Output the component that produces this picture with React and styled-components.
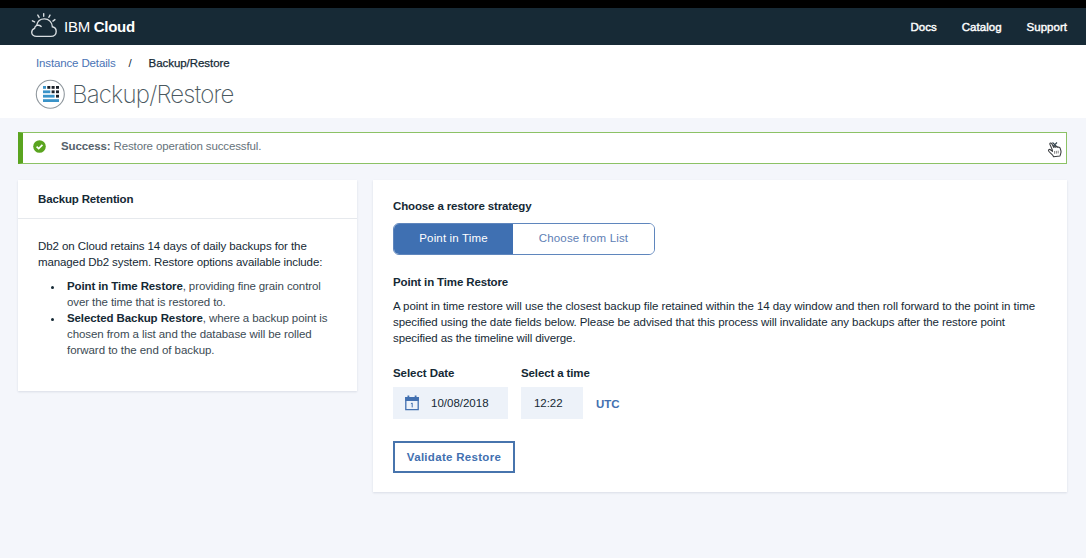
import React from "react";
import styled, { createGlobalStyle } from "styled-components";

const GlobalStyle = createGlobalStyle`
  *, *::before, *::after { box-sizing: border-box; }
  html, body { margin: 0; height: 100%; }
  body {
    background: #f4f6fb;
    font-family: "Liberation Sans", Arial, sans-serif;
    font-size: 11.5px;
    line-height: 16px;
    color: #152935;
    overflow: hidden;
  }
  button { font: inherit; }
`;

const Page = styled.div`
  display: flex;
  flex-direction: column;
  height: 558px;
`;

const TopBar = styled.header`
  display: flex;
  align-items: center;
  justify-content: space-between;
  height: 45px;
  padding: 0 19px 0 30px;
  border-top: 8px solid #000;
  background: #172a36;
  color: #fff;
  flex: none;
`;

const Brand = styled.div`
  display: flex;
  align-items: center;
  gap: 6px;
  font-size: 15px;
  letter-spacing: -0.27px;
  svg { margin-top: -3px; }
`;

const Nav = styled.nav`
  display: flex;
  gap: 25px;
`;

const NavLink = styled.a`
  letter-spacing: 0.02px;
  -webkit-text-stroke: 0.4px #fff;
`;

const PageHead = styled.section`
  height: 73px;
  flex: none;
  padding: 10px 36px 0;
  background: #fff;
`;

const Crumbs = styled.div`
  display: flex;
`;

const CrumbLink = styled.a`
  color: #4a73b5;
  letter-spacing: -0.14px;
`;

const CrumbSlash = styled.span`
  width: 33px;
  padding-left: 13px;
`;

const CrumbHere = styled.span`
  letter-spacing: -0.06px;
  -webkit-text-stroke: 0.25px #152935;
`;

const TitleRow = styled.div`
  display: flex;
  align-items: center;
  gap: 7px;
  margin: 8px 0 0 -1px;
  svg { margin-top: -1px; }
`;

const Title = styled.h1`
  margin: 1px 0 0;
  font-family: Inter, "Liberation Sans", sans-serif;
  font-size: 24px;
  line-height: 30px;
  font-weight: 250;
  letter-spacing: -0.8px;
  color: #4a5860;
`;

const Notice = styled.div`
  position: relative;
  display: flex;
  align-items: center;
  height: 32px;
  margin: 14px 19px 0 18px;
  padding: 0 4px 4px 10px;
  border: 1px solid #8cc265;
  border-left: 5px solid #5aa41f;
  background: #fff;
  color: #66727a;
  flex: none;
  strong { color: #55626b; }
`;

const NoticeText = styled.span`
  margin-left: 15px;
  flex: 1;
  letter-spacing: -0.13px;
`;

const Columns = styled.main`
  display: flex;
  align-items: flex-start;
  gap: 16px;
  margin: 16px 19px 0 18px;
`;

const Card = styled.section`
  width: ${(p) => p.$width}px;
  height: ${(p) => p.$height}px;
  background: #fff;
  box-shadow: 0 1px 2px rgba(40, 60, 90, 0.13);
`;

const CardHead = styled.div`
  height: 39px;
  padding: 11px 20px;
  border-bottom: 1px solid #e6e9ed;
`;

const CardBody = styled.div`
  padding: ${(p) => p.$top}px 20px 0;
`;

const Heading = styled.h2`
  margin: 0;
  font-size: 11.5px;
  line-height: 16px;
  font-weight: 700;
  letter-spacing: ${(p) => p.$track || 0}px;
`;

const Line = styled.span`
  display: block;
  white-space: nowrap;
  letter-spacing: ${(p) => p.$track || 0}px;
`;

const Copy = styled.p`
  margin: ${(p) => p.$top || 0}px 0 0;
`;

const Bullets = styled.ul`
  margin: 8px 0 0;
  padding-left: 26px;
  color: #3b4a54;
  li { padding-left: 3px; }
  strong, li::marker { color: #152935; }
`;

const Toggle = styled.div`
  display: flex;
  width: 262px;
  height: 32px;
  margin: 9px 0 19px;
  border: 1px solid #5f86bd;
  border-radius: 6px;
  overflow: hidden;
`;

const ToggleOption = styled.button`
  width: ${(p) => p.$width}px;
  padding: 0 0 2px;
  border: 0;
  letter-spacing: 0.15px;
  background: ${(p) => (p.$active ? "#3f70b2" : "#fff")};
  color: ${(p) => (p.$active ? "#fff" : "#6080b5")};
`;

const Fields = styled.div`
  display: flex;
  gap: 13px;
  margin-top: 19px;
`;

const Field = styled.div`
  width: ${(p) => p.$width}px;
  white-space: nowrap;
`;

const FieldBox = styled.div`
  display: flex;
  align-items: center;
  gap: 12px;
  height: 32px;
  margin-top: 6px;
  padding: 0 0 1px ${(p) => p.$left}px;
  background: #edf2f9;
  letter-spacing: ${(p) => p.$track || 0}px;
`;

const Zone = styled.span`
  align-self: flex-end;
  margin-bottom: 7px;
  color: #4270b0;
  font-weight: 700;
`;

const OutlineButton = styled.button`
  width: 122px;
  height: 32px;
  margin-top: 22px;
  padding: 0 0 1px;
  border: 2px solid #4774ad;
  background: #fff;
  color: #4270b0;
  font-weight: 700;
  letter-spacing: 0.3px;
`;

const CloudIcon = () => (
  <svg width="28" height="26" viewBox="0 0 28 26" fill="none" stroke="#d8dde1" strokeWidth="1.4" strokeLinecap="round">
    <path d="M6.6 24.4H20.9C24.2 24.4 26.2 22.2 26.2 19.5C26.2 17.1 24.6 15.2 22.4 14.8C22.2 10.2 18.8 6.9 14.4 6.9C10.3 6.9 7.4 9.4 6.7 13.4C5.4 14 4.7 15.1 4.6 16.3C2.9 17 1.7 18.6 1.7 20.3C1.7 22.6 3.8 24.4 6.6 24.4Z" />
    <path d="M6.7 13.4C8.4 12.9 10 13.3 11.2 14.4" />
    <path d="M13.7 1.6V4.2M7.8 3.1L9.1 5.4M20 3.1L18.9 5.3M2.4 8.8L4.6 9.9M24.9 7.6L22.9 9.1" />
  </svg>
);

const ServiceIcon = () => (
  <svg width="30" height="30" viewBox="0 0 30 30">
    <circle cx="15.3" cy="15.2" r="14" fill="#fff" stroke="#8f979d" strokeWidth="1.1" />
    <g fill="#1b2129">
      <rect x="12.3" y="7" width="3" height="2.8" />
      <rect x="16.6" y="7" width="3" height="2.8" />
      <rect x="21" y="7" width="3" height="2.8" />
      <rect x="16.6" y="11.4" width="3" height="2.8" />
      <rect x="21" y="11.4" width="3" height="2.8" />
      <rect x="21" y="15.8" width="3" height="2.8" />
    </g>
    <g fill="#3a93c8">
      <rect x="8" y="7" width="3" height="2.8" />
      <rect x="8" y="11.4" width="7.3" height="2.8" />
      <rect x="8" y="15.8" width="11.6" height="2.8" />
      <rect x="8" y="20.2" width="16" height="2.8" />
    </g>
  </svg>
);

const SuccessIcon = () => (
  <svg width="13" height="13" viewBox="0 0 13 13">
    <circle cx="6.5" cy="6.5" r="6.3" fill="#5aa41f" />
    <path d="M3.6 6.6L5.7 8.6L9.4 4.8" fill="none" stroke="#fff" strokeWidth="1.7" />
  </svg>
);

const CalendarIcon = () => (
  <svg width="14" height="16" viewBox="0 0 14 16">
    <path d="M0.8 2.6H13.2V14.6H0.8Z" fill="none" stroke="#4270b0" strokeWidth="1.3" />
    <path d="M0.2 2H13.8V6H0.2ZM2.5 0.4H4.3V3H2.5ZM9.7 0.4H11.5V3H9.7Z" fill="#4270b0" />
    <path d="M5.9 8.7L7.2 8V12.4" fill="none" stroke="#4270b0" strokeWidth="1" />
  </svg>
);

const Pointer = styled.svg`
  position: absolute;
  right: 3px;
  top: 7px;
`;

const HandOverClose = () => (
  <Pointer width="16" height="18" viewBox="0 0 16 18">
    <path d="M5.5 2.5L10 7M10 2.5L5.5 7" stroke="#33434d" strokeWidth="1.1" />
    <path
      d="M5.2 9.6L2.9 4.2C2.5 3 4.1 2.5 4.7 3.6L6.8 7.4C6.9 6.4 8.2 6.3 8.7 7.2C9.1 6.3 10.4 6.5 10.7 7.4C11.5 6.8 12.9 7.4 13.2 8.4L14 11.2C14.3 13.2 13.4 14.2 13 16L6.6 16.7C5.8 14.6 3.4 13.5 1.8 11.3C0.9 9.9 2.2 8.9 3.4 9.7L5.5 11.3Z"
      fill="#fff"
      stroke="#3a3d40"
      strokeWidth="1.1"
      strokeLinejoin="round"
    />
    <path d="M7.6 11V13.8M9.4 10.9V13.6M11.2 10.7V13.4" stroke="#777" strokeWidth="0.9" />
  </Pointer>
);

export default function App() {
  return (
    <Page>
      <GlobalStyle />
      <TopBar>
        <Brand>
          <CloudIcon />
          <span>IBM <strong>Cloud</strong></span>
        </Brand>
        <Nav>
          <NavLink>Docs</NavLink>
          <NavLink>Catalog</NavLink>
          <NavLink>Support</NavLink>
        </Nav>
      </TopBar>
      <PageHead>
        <Crumbs>
          <CrumbLink>Instance Details</CrumbLink>
          <CrumbSlash>/</CrumbSlash>
          <CrumbHere>Backup/Restore</CrumbHere>
        </Crumbs>
        <TitleRow>
          <ServiceIcon />
          <Title>Backup/Restore</Title>
        </TitleRow>
      </PageHead>
      <Notice>
        <SuccessIcon />
        <NoticeText><strong>Success:</strong> Restore operation successful.</NoticeText>
        <HandOverClose />
      </Notice>
      <Columns>
        <Card $width={339} $height={211}>
          <CardHead><Heading $track={-0.15}>Backup Retention</Heading></CardHead>
          <CardBody $top={19}>
            <Copy>
              <Line $track={-0.08}>Db2 on Cloud retains 14 days of daily backups for the</Line>
              <Line $track={-0.11}>managed Db2 system. Restore options available include:</Line>
            </Copy>
            <Bullets>
              <li>
                <Line $track={-0.11}><strong>Point in Time Restore</strong>, providing fine grain control</Line>
                <Line $track={-0.09}>over the time that is restored to.</Line>
              </li>
              <li>
                <Line $track={-0.1}><strong>Selected Backup Restore</strong>, where a backup point is</Line>
                <Line $track={-0.08}>chosen from a list and the database will be rolled</Line>
                <Line $track={-0.05}>forward to the end of backup.</Line>
              </li>
            </Bullets>
          </CardBody>
        </Card>
        <Card $width={694} $height={312}>
          <CardBody $top={18}>
            <Heading $track={-0.14}>Choose a restore strategy</Heading>
            <Toggle>
              <ToggleOption $active $width={119}>Point in Time</ToggleOption>
              <ToggleOption $width={141}>Choose from List</ToggleOption>
            </Toggle>
            <Heading $track={-0.14}>Point in Time Restore</Heading>
            <Copy $top={8}>
              <Line $track={-0.056}>A point in time restore will use the closest backup file retained within the 14 day window and then roll forward to the point in time</Line>
              <Line $track={-0.08}>specified using the date fields below. Please be advised that this process will invalidate any backups after the restore point</Line>
              <Line $track={-0.09}>specified as the timeline will diverge.</Line>
            </Copy>
            <Fields>
              <Field $width={115}>
                <Heading $track={-0.05}>Select Date</Heading>
                <FieldBox $left={12}><CalendarIcon />10/08/2018</FieldBox>
              </Field>
              <Field $width={62}>
                <Heading $track={-0.12}>Select a time</Heading>
                <FieldBox $left={13} $track={-0.05}>12:22</FieldBox>
              </Field>
              <Zone>UTC</Zone>
            </Fields>
            <OutlineButton>Validate Restore</OutlineButton>
          </CardBody>
        </Card>
      </Columns>
    </Page>
  );
}
